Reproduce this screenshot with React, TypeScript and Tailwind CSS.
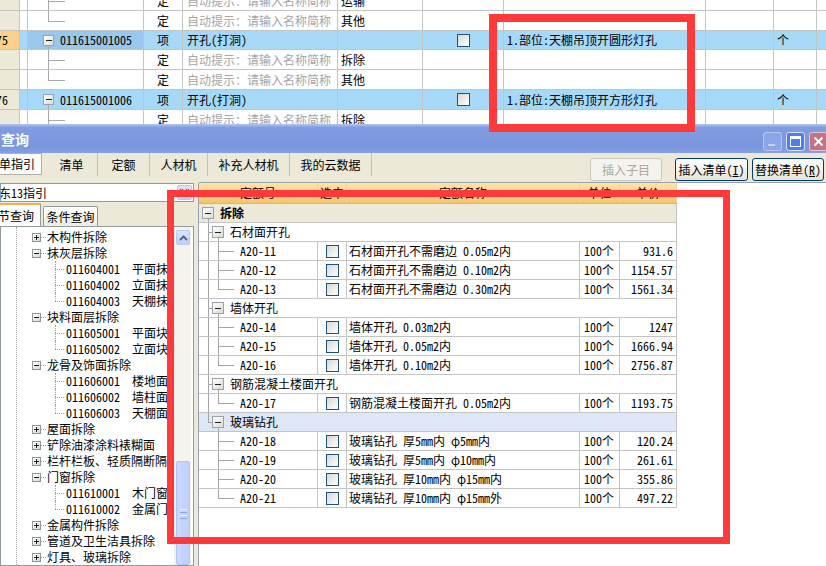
import React from 'react';

const FONT = "font-['Noto_Sans_Mono_CJK_SC','Noto_Sans_CJK_SC',sans-serif]";
const LINE = 'border-r border-[#c4c4c4]';
const BLUE = 'bg-[#a6d8f8]';

type TopRow = {
  h: string;
  tree?: 'mid' | 'last';
  item?: boolean;
  hdr?: string;
  hdrSel?: boolean;
  sel?: boolean;
  selCell?: boolean;
  code?: string;
  typ: string;
  hint?: boolean;
  name?: string;
  c6?: string;
  feat?: string;
  unit?: string;
};

const topRows: TopRow[] = [
  { h: 'h-[20px]', tree: 'mid', typ: '定', hint: true, c6: '运输' },
  { h: 'h-[20px]', tree: 'last', typ: '定', hint: true, c6: '其他' },
  { h: 'h-[19px]', item: true, hdr: '75', hdrSel: true, sel: true, selCell: true, code: '011615001005', typ: '项', name: '开孔(打洞)', feat: '1.部位:天棚吊顶开圆形灯孔', unit: '个' },
  { h: 'h-[20px]', tree: 'mid', typ: '定', hint: true, c6: '拆除' },
  { h: 'h-[20px]', tree: 'last', typ: '定', hint: true, c6: '其他' },
  { h: 'h-[20px]', item: true, hdr: '76', sel: true, code: '011615001006', typ: '项', name: '开孔(打洞)', feat: '1.部位:天棚吊顶开方形灯孔', unit: '个' },
  { h: 'h-[20px]', tree: 'mid', typ: '定', hint: true, c6: '拆除' },
];

function Check() {
  return <div className="w-[13px] h-[13px] shrink-0 border border-[#1c5180] bg-gradient-to-br from-[#d8d8d2] to-white" />;
}

function MinusBox({ big }: { big?: boolean }) {
  return (
    <div
      className={`relative shrink-0 flex items-center justify-center border border-[#9aa3ad] bg-gradient-to-br from-white to-[#dcdcd4] ${
        big ? 'w-[12px] h-[12px]' : 'w-[11px] h-[11px]'
      }`}
    >
      <div className="w-[6px] h-[1px] bg-[#222]" />
    </div>
  );
}

function TopRowView({ r }: { r: TopRow }) {
  const rowBg = r.sel ? BLUE : 'bg-white';
  return (
    <div className={`flex shrink-0 border-b border-[#c4c4c4] ${r.h} ${rowBg}`}>
      <div className={`w-[20px] shrink-0 ${LINE} ${r.hdrSel ? 'bg-[#fdd08c]' : 'bg-[#ece9d8]'} flex items-center overflow-hidden`}>
        {r.hdr && <span className="-ml-[4px] whitespace-nowrap">{r.hdr}</span>}
      </div>
      <div className={`w-[8px] shrink-0 ${LINE}`} />
      <div className={`relative w-[116px] shrink-0 ${LINE} ${r.selCell ? 'bg-[#99c7ee]' : ''} flex items-center pl-[15px]`}>
        {r.tree && (
          <>
            <div className={`absolute left-[20px] top-0 w-px bg-[#a8a8a8] ${r.tree === 'mid' ? 'h-full' : 'h-1/2'}`} />
            <div className="absolute left-[20px] top-1/2 w-[17px] h-px bg-[#a8a8a8]" />
          </>
        )}
        {r.item && (
          <>
            <div className="absolute left-[20px] top-1/2 bottom-0 w-px bg-[#a8a8a8]" />
            <MinusBox />
            <span className="ml-[6px] whitespace-nowrap">{r.code}</span>
          </>
        )}
      </div>
      <div className={`w-[39px] shrink-0 ${LINE} flex items-center justify-center`}>{r.typ}</div>
      <div className={`w-[155px] shrink-0 ${LINE} flex items-center pl-[4px] whitespace-nowrap overflow-hidden ${r.hint ? 'text-[#a5a5a5] bg-white' : ''}`}>
        {r.hint ? '自动提示：请输入名称简称' : r.name}
      </div>
      <div className={`w-[85px] shrink-0 ${LINE} flex items-center pl-[3px] ${r.sel ? '' : 'bg-white'}`}>{r.c6}</div>
      <div className={`w-[81px] shrink-0 ${LINE} flex items-center justify-center`}>{r.item && <Check />}</div>
      <div className={`w-[202px] shrink-0 ${LINE} flex items-center pl-[3px] whitespace-nowrap`}>{r.feat}</div>
      <div className={`w-[68px] shrink-0 ${LINE}`} />
      <div className={`w-[43px] shrink-0 ${LINE} flex items-center pl-[3px]`}>{r.unit}</div>
      <div className="flex-1" />
    </div>
  );
}

function TopGrid() {
  return (
    <div className="h-[124px] overflow-hidden shrink-0">
      <div className="-mt-[9px] flex flex-col">
        {topRows.map((r, i) => (
          <TopRowView key={i} r={r} />
        ))}
      </div>
    </div>
  );
}

function TitleBar() {
  return (
    <div className="relative h-[29px] shrink-0 flex items-end bg-[linear-gradient(to_bottom,#b4c6f1_0%,#819ce1_12%,#7a96de_80%,#86a0e3_100%)]">
      <span className="self-center pl-[1px] text-white font-bold text-[14px] leading-[16px]">查询</span>
      <div className="ml-auto flex gap-[4px] pb-[2px] -mr-[2px]">
        <div className="w-[19px] h-[19px] rounded-[3px] border border-[#b9c8f0] bg-[#8aa5e8] flex items-end pl-[4px] pb-[4px]">
          <div className="w-[7px] h-[2px] bg-[#c6d3f5]" />
        </div>
        <div className="w-[19px] h-[19px] rounded-[3px] border border-[#d6e0fa] bg-[#4f7de9] flex items-center justify-center">
          <div className="w-[11px] h-[11px] border border-white border-t-[3px]" />
        </div>
        <div className="w-[19px] h-[19px] rounded-[3px] border border-[#e8c4cc] bg-[#c47286] flex items-center justify-center">
          <svg width="11" height="11" viewBox="0 0 11 11">
            <path d="M1.5 1.5 L9.5 9.5 M9.5 1.5 L1.5 9.5" stroke="#fff" strokeWidth="2" />
          </svg>
        </div>
      </div>
    </div>
  );
}

const tabs = [
  { label: '清单', w: 'w-[52px]' },
  { label: '定额', w: 'w-[52px]' },
  { label: '人材机', w: 'w-[58px]' },
  { label: '补充人材机', w: 'w-[82px]' },
  { label: '我的云数据', w: 'w-[82px]' },
];

function XpButton({ children, w, disabled }: { children: React.ReactNode; w: string; disabled?: boolean }) {
  return (
    <div
      className={`${w} h-[23px] rounded-[3px] flex items-center justify-center whitespace-nowrap ${
        disabled
          ? 'border border-[#cac8bb] text-[#aca899] bg-[#f4f3ee]'
          : 'border border-[#003c74] bg-gradient-to-b from-white to-[#e6e3d6]'
      }`}
    >
      {children}
    </div>
  );
}

function Toolbar() {
  return (
    <div className="h-[29px] shrink-0 flex items-start">
      <div className="flex h-[23px]">
        <div className="w-[42px] h-[22px] bg-[#fcfcfa] border border-l-0 border-[#b4b2a6] flex items-center whitespace-nowrap overflow-hidden mr-[4px]">
          <span className="-ml-[1px]">单指引</span>
        </div>
        {tabs.map((t) => (
          <div key={t.label} className={`${t.w} h-[23px] border-r border-[#c5c2b2] flex items-center justify-center whitespace-nowrap`}>
            {t.label}
          </div>
        ))}
      </div>
      <div className="ml-auto mt-[5px] flex">
        <div className="mr-[13px]">
          <XpButton w="w-[72px]" disabled>
            插入子目
          </XpButton>
        </div>
        <div className="mr-[4px]">
          <XpButton w="w-[73px]">
            插入清单(<span className="underline">I</span>)
          </XpButton>
        </div>
        <div className="mr-[2px]">
          <XpButton w="w-[72px]">
            替换清单(<span className="underline">R</span>)
          </XpButton>
        </div>
      </div>
    </div>
  );
}

type TreeItem = { c?: '+' | '-'; l?: string; t: string; last?: boolean };
const tree: TreeItem[] = [
  { c: '+', t: '木构件拆除' },
  { c: '-', t: '抹灰层拆除' },
  { l: '011604001', t: '平面抹灰层拆除' },
  { l: '011604002', t: '立面抹灰层拆除' },
  { l: '011604003', t: '天棚抹灰面拆除', last: true },
  { c: '-', t: '块料面层拆除' },
  { l: '011605001', t: '平面块料拆除' },
  { l: '011605002', t: '立面块料拆除', last: true },
  { c: '-', t: '龙骨及饰面拆除' },
  { l: '011606001', t: '楼地面龙骨及饰面拆除' },
  { l: '011606002', t: '墙柱面龙骨及饰面拆除' },
  { l: '011606003', t: '天棚面龙骨及饰面拆除', last: true },
  { c: '+', t: '屋面拆除' },
  { c: '+', t: '铲除油漆涂料裱糊面' },
  { c: '+', t: '栏杆栏板、轻质隔断隔墙拆除' },
  { c: '-', t: '门窗拆除' },
  { l: '011610001', t: '木门窗拆除' },
  { l: '011610002', t: '金属门窗拆除', last: true },
  { c: '+', t: '金属构件拆除' },
  { c: '+', t: '管道及卫生洁具拆除' },
  { c: '+', t: '灯具、玻璃拆除' },
];

function PlusBox({ plus }: { plus: boolean }) {
  return (
    <div className="relative w-[9px] h-[9px] shrink-0 border border-[#8c96a0] bg-gradient-to-br from-white to-[#d8d8d0] flex items-center justify-center">
      <div className="absolute w-[5px] h-px bg-[#1a1a1a]" />
      {plus && <div className="absolute w-px h-[5px] bg-[#1a1a1a]" />}
    </div>
  );
}

function LeftTree() {
  return (
    <div className="relative flex-1 min-w-0 overflow-hidden pt-[2px]">
      <div className="absolute left-[15px] top-0 bottom-0 border-l border-dotted border-[#a0a0a0]" />
      {tree.map((it, i) =>
        it.c ? (
          <div key={i} className="h-[16px] flex items-center pl-[31px] whitespace-nowrap">
            <PlusBox plus={it.c === '+'} />
            <div className="w-[5px] shrink-0 border-t border-dotted border-[#a0a0a0]" />
            <span className="ml-[1px] shrink-0">{it.t}</span>
          </div>
        ) : (
          <div key={i} className="relative h-[16px] flex items-center pl-[54px] whitespace-nowrap">
            <div className={`absolute left-[54px] top-0 border-l border-dotted border-[#a0a0a0] ${it.last ? 'h-1/2' : 'h-full'}`} />
            <div className="w-[9px] shrink-0 border-t border-dotted border-[#a0a0a0]" />
            <span className="ml-[2px] w-[66px] shrink-0">{it.l}</span>
            <span className="shrink-0">{it.t}</span>
          </div>
        )
      )}
    </div>
  );
}

function ScrollBar() {
  return (
    <div className="w-[17px] mr-[2px] shrink-0 flex flex-col bg-[#f4f3ee] border-l border-[#eeede5]">
      <div className="mt-[3px] h-[15px] mx-[1px] rounded-[2px] border border-[#b6c9f5] bg-gradient-to-b from-[#dbe5fd] to-[#bccffb] flex items-center justify-center">
        <svg width="9" height="6" viewBox="0 0 9 6">
          <path d="M1 5 L4.5 1.5 L8 5" stroke="#4d6185" strokeWidth="1.8" fill="none" />
        </svg>
      </div>
      <div className="flex-1" />
      <div className="h-[104px] mx-[1px] rounded-[2px] border border-[#b0c4f4] bg-gradient-to-r from-[#c9d8fd] to-[#bed0fb] flex flex-col items-center pt-[47px] gap-[2px]">
        <div className="w-[7px] h-px bg-[#eef3ff]" />
        <div className="w-[7px] h-px bg-[#8ca5e6]" />
        <div className="w-[7px] h-px bg-[#eef3ff]" />
        <div className="w-[7px] h-px bg-[#8ca5e6]" />
      </div>
    </div>
  );
}

function LeftPanel() {
  return (
    <div className="w-[196px] shrink-0 flex flex-col min-h-0">
      <div className="mt-[1px] h-[19px] w-[194px] bg-white border border-[#7f9db9] flex items-center overflow-hidden">
        <span className="-ml-[2px] flex-1 whitespace-nowrap">东13指引</span>
        <div className="w-[15px] h-[15px] shrink-0 mr-px rounded-[2px] border border-[#b3c6f4] bg-gradient-to-b from-[#dce6fd] to-[#bfd1fb] flex items-start justify-center pt-[2px]">
          <svg width="11" height="5" viewBox="0 0 11 5">
            <path d="M1 1 L2.5 3 L4 1 M7 1 L8.5 3 L10 1" stroke="#4d6185" strokeWidth="1.2" fill="none" />
          </svg>
        </div>
      </div>
      <div className="mt-[1px] h-[23px] flex items-end">
        <div className="w-[41px] h-[23px] bg-[#fcfcfe] border-t-[2px] border-r border-t-[#f3b24a] border-r-[#919b9c] flex items-center whitespace-nowrap overflow-hidden">
          <span className="-ml-[2px]">节查询</span>
        </div>
        <div className="ml-[2px] w-[55px] h-[20px] rounded-t-[2px] border border-b-0 border-[#919b9c] bg-gradient-to-b from-white to-[#ecebe4] flex items-center justify-center whitespace-nowrap">
          条件查询
        </div>
      </div>
      <div className="flex-1 min-h-0 w-[194px] border border-[#919b9c] bg-white flex overflow-hidden">
        <LeftTree />
        <ScrollBar />
      </div>
    </div>
  );
}

type RRow =
  | { t: 'group'; label: string }
  | { t: 'sub'; label: string; lastSub?: boolean; sel?: boolean }
  | { t: 'item'; code: string; name: string; price: string; last?: boolean; afterLastSub?: boolean };

const rRows: RRow[] = [
  { t: 'group', label: '拆除' },
  { t: 'sub', label: '石材面开孔' },
  { t: 'item', code: 'A20-11', name: '石材面开孔不需磨边 0.05m2内', price: '931.6' },
  { t: 'item', code: 'A20-12', name: '石材面开孔不需磨边 0.10m2内', price: '1154.57' },
  { t: 'item', code: 'A20-13', name: '石材面开孔不需磨边 0.30m2内', price: '1561.34', last: true },
  { t: 'sub', label: '墙体开孔' },
  { t: 'item', code: 'A20-14', name: '墙体开孔 0.03m2内', price: '1247' },
  { t: 'item', code: 'A20-15', name: '墙体开孔 0.05m2内', price: '1666.94' },
  { t: 'item', code: 'A20-16', name: '墙体开孔 0.10m2内', price: '2756.87', last: true },
  { t: 'sub', label: '钢筋混凝土楼面开孔' },
  { t: 'item', code: 'A20-17', name: '钢筋混凝土楼面开孔 0.05m2内', price: '1193.75', last: true },
  { t: 'sub', label: '玻璃钻孔', lastSub: true, sel: true },
  { t: 'item', code: 'A20-18', name: '玻璃钻孔 厚5mm内 φ5mm内', price: '120.24', afterLastSub: true },
  { t: 'item', code: 'A20-19', name: '玻璃钻孔 厚5mm内 φ10mm内', price: '261.61', afterLastSub: true },
  { t: 'item', code: 'A20-20', name: '玻璃钻孔 厚10mm内 φ15mm内', price: '355.86', afterLastSub: true },
  { t: 'item', code: 'A20-21', name: '玻璃钻孔 厚10mm内 φ15mm外', price: '497.22', last: true, afterLastSub: true },
];

const TL = 'bg-[#a4a4a4]';

function RightTable() {
  return (
    <div className="w-[478px] flex flex-col">
      <div className="h-[21px] flex bg-gradient-to-b from-[#fde4ab] to-[#f2c46b] border-b border-[#e2b65e]">
        <div className="w-[119px] border-r border-[#e6d3a6] flex items-center justify-center">定额号</div>
        <div className="w-[29px] border-r border-[#e6d3a6] flex items-center justify-center">选中</div>
        <div className="w-[233px] border-r border-[#e6d3a6] flex items-center justify-center">定额名称</div>
        <div className="w-[40px] border-r border-[#e6d3a6] flex items-center justify-center">单位</div>
        <div className="w-[57px] border-r border-[#e6d3a6] flex items-center justify-center">单价</div>
      </div>
      {rRows.map((r, i) => {
        if (r.t === 'group') {
          return (
            <div key={i} className="relative h-[19px] flex items-center bg-[#ece9d8] border-b border-r border-[#c4c4c4] pl-[3px]">
              <div className={`absolute left-[9px] top-[14px] bottom-0 w-px ${TL}`} />
              <MinusBox big />
              <span className="ml-[6px] font-bold">{r.label}</span>
            </div>
          );
        }
        if (r.t === 'sub') {
          return (
            <div key={i} className={`relative h-[19px] flex items-center border-b border-r border-[#c4c4c4] pl-[13px] ${r.sel ? 'bg-[#dde7f5]' : 'bg-white'}`}>
              <div className={`absolute left-[9px] top-0 w-px ${TL} ${r.lastSub ? 'h-1/2' : 'h-full'}`} />
              <div className={`absolute left-[9px] top-1/2 w-[4px] h-px ${TL}`} />
              <div className={`absolute left-[19px] top-1/2 bottom-0 w-px ${TL}`} />
              <MinusBox big />
              <span className="ml-[6px] whitespace-nowrap">{r.label}</span>
            </div>
          );
        }
        return (
          <div key={i} className="h-[19px] flex border-b border-[#c4c4c4] bg-white">
            <div className={`relative w-[119px] shrink-0 ${LINE} flex items-center pl-[41px]`}>
              {!r.afterLastSub && <div className={`absolute left-[9px] top-0 h-full w-px ${TL}`} />}
              <div className={`absolute left-[19px] top-0 w-px ${TL} ${r.last ? 'h-1/2' : 'h-full'}`} />
              <div className={`absolute left-[19px] top-1/2 w-[16px] h-px ${TL}`} />
              {r.code}
            </div>
            <div className={`w-[29px] shrink-0 ${LINE} flex items-center justify-center`}>
              <Check />
            </div>
            <div className={`w-[233px] shrink-0 ${LINE} flex items-center pl-[2px] whitespace-nowrap overflow-hidden`}>{r.name}</div>
            <div className={`w-[40px] shrink-0 ${LINE} flex items-center pl-[4px] whitespace-nowrap`}>100个</div>
            <div className={`w-[57px] shrink-0 ${LINE} flex items-center justify-end pr-[3px]`}>{r.price}</div>
          </div>
        );
      })}
    </div>
  );
}

function RightPanel() {
  return (
    <div className="flex-1 min-w-0 pl-[2px] flex">
      <div className="flex-1 bg-white border-l border-t border-[#9aa3ad] rounded-tl-[3px] overflow-hidden">
        <RightTable />
      </div>
    </div>
  );
}

function Dialog() {
  return (
    <div className="flex-1 min-h-0 flex flex-col bg-[#ece9d8]">
      <TitleBar />
      <Toolbar />
      <div className="flex-1 min-h-0 flex">
        <LeftPanel />
        <RightPanel />
      </div>
    </div>
  );
}

export default function App() {
  return (
    <div className={`relative w-[826px] h-[566px] overflow-hidden bg-white text-[12px] leading-[14px] text-black flex flex-col ${FONT}`}>
      <TopGrid />
      <Dialog />
      <div className="absolute left-[489px] top-[14px] w-[206px] h-[118px] border-[8px] border-[#ff3a3a]" />
      <div className="absolute left-[167px] top-[190px] w-[563px] h-[354px] border-[7px] border-[#ff3a3a]" />
    </div>
  );
}
